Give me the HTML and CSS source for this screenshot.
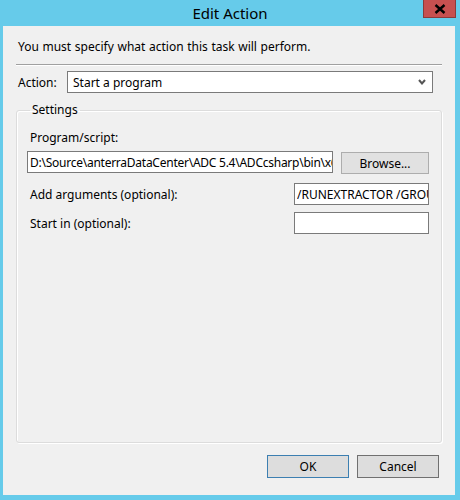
FILE: index.html
```html
<!DOCTYPE html>
<html>
<head>
<meta charset="utf-8">
<link rel="stylesheet" href="styles.css">
</head>
<body>
<div class="window">
  <div class="titlebar">
    <span class="title">Edit Action</span>
    <div class="close"><svg width="12" height="10" viewBox="0 0 12 10"><path d="M1.5 1 L10.5 9 M10.5 1 L1.5 9" stroke="#000" stroke-width="2.4"/></svg></div>
  </div>
  <div class="dialog">
    <div class="intro">You must specify what action this task will perform.</div>
    <div class="sep"></div>
    <div class="action-row">
      <span class="label">Action:</span>
      <div class="combo">
        <span>Start a program</span>
        <svg class="chev" width="8" height="6" viewBox="0 0 8 6"><path d="M1 1 L4 4.5 L7 1" stroke="#555" stroke-width="2" fill="none"/></svg>
      </div>
    </div>
    <fieldset class="group">
      <legend>Settings</legend>
      <div class="lbl-prog">Program/script:</div>
      <div class="prog-row">
        <div class="input prog"><span class="clip">D:\Source\anterraDataCenter\ADC 5.4\ADCcsharp\bin\x6</span></div>
        <div class="btn browse">Browse...</div>
      </div>
      <div class="opt-row first">
        <span class="label">Add arguments (optional):</span>
        <div class="input small"><span class="clip">/RUNEXTRACTOR /GROU</span></div>
      </div>
      <div class="opt-row">
        <span class="label">Start in (optional):</span>
        <div class="input small"></div>
      </div>
    </fieldset>
    <div class="buttons">
      <div class="btn ok">OK</div>
      <div class="btn cancel">Cancel</div>
    </div>
  </div>
</div>
</body>
</html>
```
FILE: styles.css
```css
* { box-sizing: border-box; }
html, body { margin: 0; padding: 0; }
body {
  width: 460px;
  height: 500px;
  background: #66cbea;
  font-family: "Segoe UI", "Noto Sans", "Liberation Sans", sans-serif;
  font-size: 12px;
  color: #000;
  overflow: hidden;
}
.window { width: 460px; height: 500px; }
.titlebar {
  position: relative;
  height: 26px;
  display: flex;
  justify-content: center;
  align-items: center;
}
.title {
  font-size: 15px;
  line-height: 24px;
  padding-left: 0;
}
.close {
  position: absolute;
  top: 0;
  right: 4px;
  width: 33px;
  height: 18px;
  background: #c75050;
  border: 1px solid #8c3a3a;
  border-top: none;
  display: flex;
  align-items: center;
  justify-content: center;
}
.dialog {
  margin: 0 5px 5px 3px;
  height: 469px;
  background: #f0f0f0;
  padding: 13px 13px 0 13px;
  display: flex;
  flex-direction: column;
}
.intro { line-height: 16px; padding-left: 2px; word-spacing: 0.5px; }
.sep {
  margin-top: 9px;
  height: 2px;
  border-top: 1px solid #a0a0a0;
  border-bottom: 1px solid #ffffff;
}
.action-row {
  margin-top: 5px;
  display: flex;
  align-items: center;
  height: 22px;
}
.action-row .label { width: 51px; padding-left: 2px; }
.combo {
  width: 366px;
  height: 22px;
  border: 1px solid #7a7a7a;
  background: #fff;
  display: flex;
  align-items: center;
  justify-content: space-between;
  padding: 0 6px 0 5px;
}
.chev { display: block; }
.group {
  margin: 9px 0 0 0;
  padding: 0 12px 0 10px;
  height: 341px;
  border: 1px solid #dcdcdc;
  border-radius: 3px;
  box-shadow: inset 1px 1px 0 #fff, 1px 1px 0 #fff;
  min-width: 0;
}
.group legend {
  padding: 0 2px;
  margin-left: 3px;
  line-height: 16px;
}
.lbl-prog { margin-top: 12px; padding-left: 3px; line-height: 16px; }
.prog-row {
  margin-top: 5px;
  display: flex;
  align-items: flex-start;
}
.input {
  height: 22px;
  border: 1px solid #7a7a7a;
  background: #fff;
  overflow: hidden;
  white-space: nowrap;
  display: flex;
  align-items: center;
  padding-left: 2px;
}
.clip { display: block; overflow: hidden; white-space: nowrap; max-width: 100%; }
.input.prog { width: 306px; letter-spacing: -0.25px; }
.btn {
  display: flex;
  align-items: center;
  justify-content: center;
  background: #e1e1e1;
  border: 1px solid #adadad;
}
.browse { width: 88px; height: 22px; margin-left: 8px; margin-top: 1px; }
.opt-row {
  display: flex;
  align-items: center;
  justify-content: space-between;
  margin-top: 7px;
  padding-left: 3px;
}
.opt-row.first { margin-top: 9px; }
.input.small { width: 135px; }
.buttons {
  margin-top: 12px;
  display: flex;
  justify-content: flex-end;
  gap: 8px;
  padding-right: 3px;
}
.buttons .btn { width: 82px; height: 23px; background: #dddddd; }
.ok { border-color: #3c7fb1 !important; }
.cancel { border-color: #707070 !important; }
```
